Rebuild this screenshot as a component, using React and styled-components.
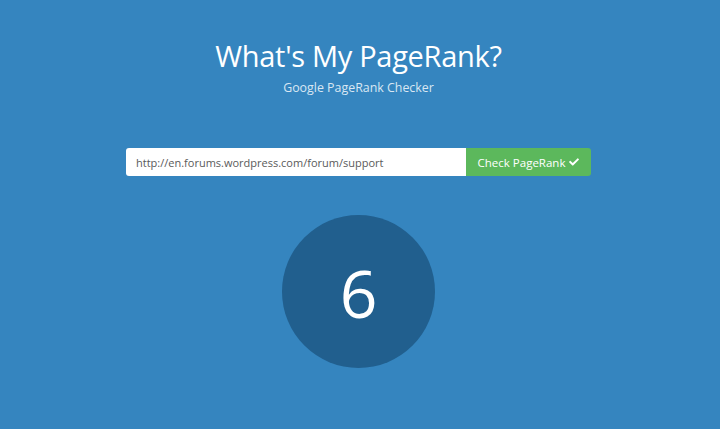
import styled, { createGlobalStyle } from 'styled-components';
import { FaCheck } from 'react-icons/fa';

const GlobalStyle = createGlobalStyle`
  html, body {
    margin: 0;
    padding: 0;
    background: #3585bf;
  }
  body {
    font-family: 'Open Sans', 'Noto Sans', sans-serif;
    color: #fff;
  }
`;

const Page = styled.main`
  min-height: 429px;
  display: flex;
  flex-direction: column;
  align-items: center;
  padding-right: 3px;
  box-sizing: border-box;
`;

const Header = styled.header`
  text-align: center;
  margin-top: 36px;
`;

const Title = styled.h1`
  margin: 0;
  font-size: 29px;
  font-weight: 400;
  line-height: 40px;
  letter-spacing: -0.3px;
`;

const Subtitle = styled.p`
  margin: 4px 0 0;
  font-size: 12.4px;
  line-height: 16px;
  color: #d9e7f3;
`;

const Form = styled.form`
  display: flex;
  width: 465px;
  height: 28px;
  margin-top: 52px;
`;

const Input = styled.input`
  flex: 1;
  min-width: 0;
  border: 0;
  border-radius: 3px 0 0 3px;
  padding: 0 10px;
  font-family: inherit;
  font-size: 11px;
  color: #5a5a5a;
  background: #fff;
  outline: none;
`;

const Button = styled.button`
  width: 125px;
  border: 0;
  border-radius: 0 3px 3px 0;
  background: #5cb85c;
  color: #fff;
  font-family: inherit;
  font-size: 11.5px;
  display: flex;
  align-items: center;
  justify-content: center;
  gap: 4px;
  cursor: pointer;
  svg {
    width: 10px;
    height: 10px;
  }
`;

const Score = styled.div`
  margin-top: 39px;
  width: 153px;
  height: 153px;
  border-radius: 50%;
  background: #215f8e;
  display: flex;
  align-items: center;
  justify-content: center;
  font-size: 66px;
  line-height: 1;
`;

export default function App() {
  return (
    <>
      <GlobalStyle />
      <Page>
        <Header>
          <Title>What's My PageRank?</Title>
          <Subtitle>Google PageRank Checker</Subtitle>
        </Header>
        <Form onSubmit={(e) => e.preventDefault()}>
          <Input type="text" defaultValue="http://en.forums.wordpress.com/forum/support" />
          <Button type="submit">
            Check PageRank <FaCheck />
          </Button>
        </Form>
        <Score>6</Score>
      </Page>
    </>
  );
}
